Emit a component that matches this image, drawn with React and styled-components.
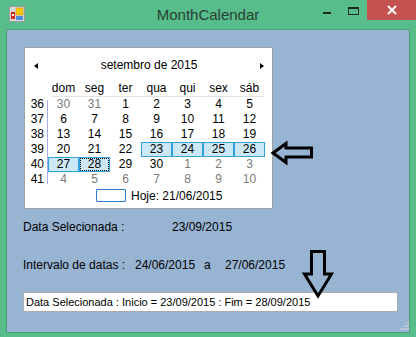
import React from 'react';
import styled, { createGlobalStyle, css } from 'styled-components';

const GlobalStyle = createGlobalStyle`
	html, body {
		margin: 0;
		padding: 0;
		background: #57bd8a;
	}
	* { box-sizing: border-box; }
`;

const uiFont = `'Segoe UI', 'Liberation Sans', Arial, sans-serif`;

const Window = styled.div`
	width: 416px;
	height: 337px;
	background: #57bd8a;
	display: flex;
	flex-direction: column;
	overflow: hidden;
`;

const TitleBar = styled.div`
	height: 29px;
	display: grid;
	grid-template-columns: 1fr auto 1fr;
	align-items: start;
`;

const AppIcon = styled.svg`
	margin: 6px 0 0 9px;
	display: block;
`;

const Title = styled.div`
	font-family: ${uiFont};
	font-size: 15px;
	line-height: 29px;
	color: #2a3d36;
`;

const Controls = styled.div`
	display: flex;
	justify-content: flex-end;
	align-items: flex-start;
`;

const CtrlButton = styled.div`
	width: ${p => p.w || 27}px;
	height: 20px;
	display: flex;
	justify-content: center;
	align-items: ${p => p.bottom ? 'flex-end' : 'center'};
	padding-bottom: ${p => p.bottom || 0}px;
	background: ${p => p.bg || 'transparent'};
`;

const MinGlyph = styled.div`
	width: 8px;
	height: 2px;
	background: #1b2a24;
`;

const MaxGlyph = styled.div`
	width: 11px;
	height: 8px;
	border: 1px solid #1b2a24;
	border-top-width: 2px;
	margin-top: 1px;
`;

const Client = styled.div`
	position: relative;
	margin: 0 6px;
	height: 304px;
	border: 1px solid #4c9f79;
	background: #98b4d3;
	padding: 17px 0 0 17px;
`;

const Calendar = styled.div`
	width: 249px;
	height: 162px;
	border: 1px solid #a0a0a0;
	background: #fff;
	font-family: ${uiFont};
	font-size: 12px;
	color: #000;
`;

const CalHeader = styled.div`
	margin-top: 10px;
	height: 15px;
	display: flex;
	align-items: center;
	justify-content: space-between;
	padding: 0 8px 0 9px;
	line-height: 15px;
`;

const Caret = styled.div`
	width: 0;
	height: 0;
	border-top: 3.5px solid transparent;
	border-bottom: 3.5px solid transparent;
	${p => p.dir === 'left' ? css`
		border-right: 4px solid #000;
	` : css`
		border-left: 4px solid #000;
	`}
`;

const NamesRow = styled.div`
	margin: 8px 0 0 23px;
	height: 16px;
	display: grid;
	grid-template-columns: repeat(7, 31px);
	line-height: 15px;
	background: linear-gradient(#e3e3e3, #e3e3e3) no-repeat 3px 15px / 213px 1px;
`;

const Cell = styled.div`
	text-align: center;
	height: 15px;
	line-height: 13px;
	color: ${p => p.muted ? '#7a7a7a' : '#000'};
	border: 1px solid transparent;
	${p => p.selected && css`
		background: #cce8f7;
		border-color: #32a0da;
	`}
	${p => p.focus && css`
		outline: 1px dotted #000;
		outline-offset: -2px;
	`}
`;

const NameCell = styled.div`
	text-align: center;
`;

const Body = styled.div`
	display: flex;
`;

const WeekCol = styled.div`
	width: 23px;
	padding-right: 4px;
	background: linear-gradient(#aaaaea, #aaaaea) no-repeat 22px 3px / 1px 84px;
`;

const WeekNum = styled.div`
	height: 15px;
	line-height: 15px;
	text-align: right;
`;

const DaysGrid = styled.div`
	display: grid;
	grid-template-columns: repeat(7, 31px);
	grid-auto-rows: 15px;
`;

const TodayRow = styled.div`
	margin: 2px 0 0 71px;
	height: 13px;
	display: flex;
	align-items: center;
	gap: 5px;
`;

const TodayBox = styled.div`
	width: 30px;
	height: 13px;
	border: 1px solid #2b7bd6;
	border-radius: 1px;
`;

const Line = styled.div`
	display: flex;
	margin-top: ${p => p.top}px;
	margin-left: -1px;
	font-family: 'Liberation Sans', Arial, sans-serif;
	font-size: 12px;
	line-height: 14px;
	color: #000;
`;

const Field = styled.span`
	width: ${p => p.w ? `${p.w}px` : 'auto'};
	flex: none;
`;

const OutputBox = styled.div`
	position: relative;
	z-index: 0;
	margin: ${p => p.top}px 0 0 -1px;
	width: 375px;
	height: 20px;
	background: #fff;
	border: 1px solid #ababab;
	padding-left: 2px;
	font-family: 'Liberation Sans', Arial, sans-serif;
	font-size: 11px;
	line-height: 18px;
	color: #000;
	white-space: nowrap;
`;

const Overlay = styled.svg`
	position: absolute;
	left: ${p => p.x}px;
	top: ${p => p.y}px;
	z-index: 2;
	overflow: visible;
`;

const weeks = [
	{ n: 36, days: [[30, 'm'], [31, 'm'], 1, 2, 3, 4, 5] },
	{ n: 37, days: [6, 7, 8, 9, 10, 11, 12] },
	{ n: 38, days: [13, 14, 15, 16, 17, 18, 19] },
	{ n: 39, days: [20, 21, 22, [23, 's'], [24, 's'], [25, 's'], [26, 's']] },
	{ n: 40, days: [[27, 's'], [28, 'sf'], 29, 30, [1, 'm'], [2, 'm'], [3, 'm']] },
	{ n: 41, days: [[4, 'm'], [5, 'm'], [6, 'm'], [7, 'm'], [8, 'm'], [9, 'm'], [10, 'm']] },
];

const names = ['dom', 'seg', 'ter', 'qua', 'qui', 'sex', 'sáb'];

const MonthCalendar = () => (
	<Calendar>
		<CalHeader>
			<Caret dir="left" />
			<span>setembro de 2015</span>
			<Caret dir="right" />
		</CalHeader>
		<NamesRow>
			{names.map(n => <NameCell key={n}>{n}</NameCell>)}
		</NamesRow>
		<Body>
			<WeekCol>
				{weeks.map(w => <WeekNum key={w.n}>{w.n}</WeekNum>)}
			</WeekCol>
			<DaysGrid>
				{weeks.flatMap(w => w.days.map((d, i) => {
					const [num, flag = ''] = Array.isArray(d) ? d : [d];
					return (
						<Cell
							key={`${w.n}-${i}`}
							muted={flag.includes('m')}
							selected={flag.includes('s')}
							focus={flag.includes('f')}
						>
							{num}
						</Cell>
					);
				}))}
			</DaysGrid>
		</Body>
		<TodayRow>
			<TodayBox />
			<span>Hoje: 21/06/2015</span>
		</TodayRow>
	</Calendar>
);

export default function App() {
	return (
		<>
			<GlobalStyle />
			<Window>
				<TitleBar>
					<AppIcon width="16" height="16" viewBox="0 0 16 16">
						<rect x="0.5" y="0.5" width="15" height="15" fill="#d9d9d9" stroke="#9a9a9a" />
						<rect x="2" y="6" width="4" height="7" fill="#d42a1c" />
						<rect x="3" y="8" width="2" height="2" fill="#fff" />
						<rect x="7" y="2" width="7" height="7" fill="#f7c400" stroke="#c99a00" strokeWidth="0.6" />
						<rect x="7" y="10" width="7" height="4" fill="#4f8fe0" />
					</AppIcon>
					<Title>MonthCalendar</Title>
					<Controls>
						<CtrlButton bottom={6}><MinGlyph /></CtrlButton>
						<CtrlButton><MaxGlyph /></CtrlButton>
						<CtrlButton w={49} bg="#c75050">
							<svg width="10" height="10" viewBox="0 0 10 10">
								<path d="M1 1 L9 9 M9 1 L1 9" stroke="#fff" strokeWidth="2" />
							</svg>
						</CtrlButton>
					</Controls>
				</TitleBar>
				<Client>
					<MonthCalendar />
					<Line top={11}>
						<Field w={149}>Data Selecionada :</Field>
						<Field>23/09/2015</Field>
					</Line>
					<Line top={24}>
						<Field w={112}>Intervalo de datas :</Field>
						<Field w={69}>24/06/2015</Field>
						<Field w={21}>a</Field>
						<Field>27/06/2015</Field>
					</Line>
					<OutputBox top={20}>
						Data Selecionada : Inicio = 23/09/2015 : Fim = 28/09/2015
					</OutputBox>

					<Overlay x={261} y={108} width="48" height="30" viewBox="0 0 48 30">
						<polygon
							points="5,15 18,5.5 18,10 43.5,10 43.5,19 18,19 18,24.5"
							fill="none"
							stroke="#000"
							strokeWidth="3"
						/>
					</Overlay>
					<Overlay x={293} y={217} width="36" height="54" viewBox="0 0 36 54">
						<polygon
							points="11.5,4.5 24.5,4.5 24.5,27 31.5,27 18,49 4.5,27 11.5,27"
							fill="none"
							stroke="#000"
							strokeWidth="3"
						/>
					</Overlay>
					<Overlay x={393} y={291} width="10" height="10" viewBox="0 0 10 10">
						<g fill="#c3cad3">
							<rect x="7" y="1" width="2" height="2" />
							<rect x="4" y="4" width="2" height="2" />
							<rect x="7" y="4" width="2" height="2" />
							<rect x="1" y="7" width="2" height="2" />
							<rect x="4" y="7" width="2" height="2" />
							<rect x="7" y="7" width="2" height="2" />
						</g>
					</Overlay>
				</Client>
			</Window>
		</>
	);
}
